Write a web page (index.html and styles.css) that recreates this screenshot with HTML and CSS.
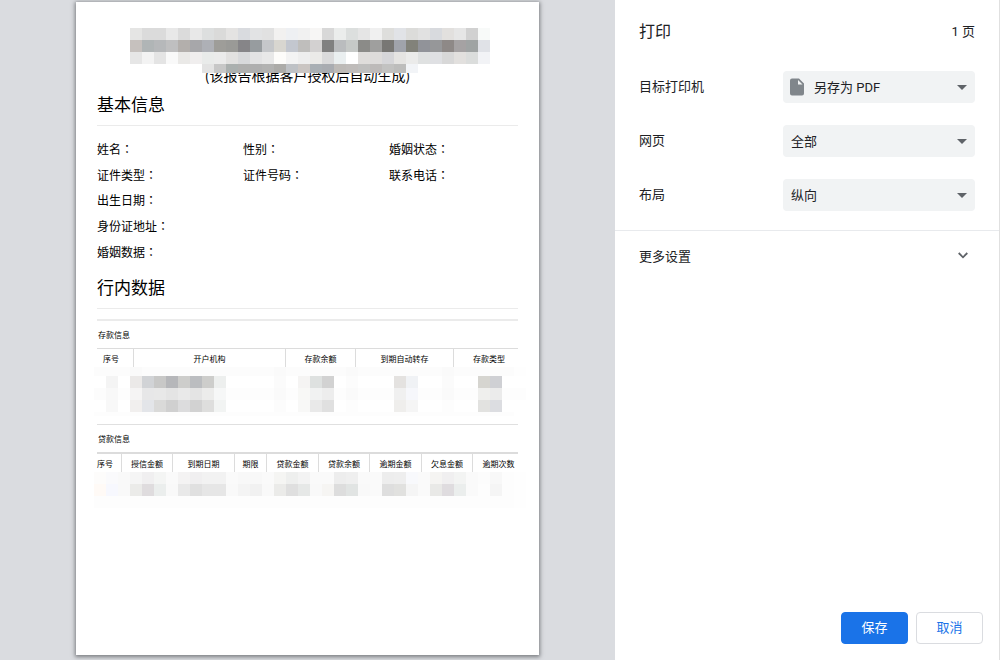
FILE: index.html
```html
<!DOCTYPE html>
<html lang="zh-CN">
<head>
<meta charset="utf-8">
<title>打印</title>
<link rel="stylesheet" href="styles.css">
</head>
<body>
<div class="dialog">
  <main class="preview">
    <article class="sheet">
      <svg class="mosaic mosaic-title" id="mosaic-title" width="360" height="45" aria-hidden="true"></svg>
      <p class="subtitle">(该报告根据客户授权后自动生成)</p>

      <h2 class="heading">基本信息</h2>
      <div class="fields">
        <span>姓名<span class="colon" lang="ja">：</span></span>
        <span>性别<span class="colon" lang="ja">：</span></span>
        <span>婚姻状态<span class="colon" lang="ja">：</span></span>
        <span>证件类型<span class="colon" lang="ja">：</span></span>
        <span>证件号码<span class="colon" lang="ja">：</span></span>
        <span>联系电话<span class="colon" lang="ja">：</span></span>
        <span class="wide">出生日期<span class="colon" lang="ja">：</span></span>
        <span class="wide">身份证地址<span class="colon" lang="ja">：</span></span>
        <span class="wide">婚姻数据<span class="colon" lang="ja">：</span></span>
      </div>

      <h2 class="heading">行内数据</h2>
      <section class="records deposits">
        <h3 class="records-title">存款信息</h3>
        <table class="grid">
          <colgroup><col class="w36"><col class="w152"><col class="w70"><col class="w98"><col class="w65"></colgroup>
          <thead><tr><th>序号</th><th>开户机构</th><th>存款余额</th><th>到期自动转存</th><th>存款类型</th></tr></thead>
        </table>
        <svg class="mosaic mosaic-table" id="mosaic-deposits" width="432" height="49" aria-hidden="true"></svg>
      </section>
      <section class="records loans">
        <h3 class="records-title">贷款信息</h3>
        <table class="grid">
          <colgroup><col class="w24"><col class="w51"><col class="w62"><col class="w32"><col class="w52"><col class="w51"><col class="w52"><col class="w51"><col class="w46"></colgroup>
          <thead><tr><th>序号</th><th>授信金额</th><th>到期日期</th><th>期限</th><th>贷款金额</th><th>贷款余额</th><th>逾期金额</th><th>欠息金额</th><th>逾期次数</th></tr></thead>
        </table>
        <svg class="mosaic mosaic-table" id="mosaic-loans" width="432" height="36" aria-hidden="true"></svg>
      </section>
    </article>
  </main>

  <aside class="panel">
    <header class="panel-head">
      <h1 class="panel-title">打印</h1>
      <span class="page-count">1 页</span>
    </header>
    <div class="setting">
      <label for="printer">目标打印机</label>
      <div class="picker">
        <select id="printer" class="with-icon"><option>另存为 PDF</option></select>
        <svg class="file-icon" width="14" height="18" viewBox="0 0 14 18" aria-hidden="true"><path d="M2 .5h7L14 5.500V15.500a2 2 0 0 1-2 2H2a2 2 0 0 1-2-2V2.500a2 2 0 0 1 2-2z" fill="#80868b"/><path d="M8 2v4.500h4.500z" fill="#f1f3f4"/></svg>
        <svg class="arrow" width="10" height="5" viewBox="0 0 10 5" aria-hidden="true"><path d="M0 0h10L5 5z" fill="#5f6368"/></svg>
      </div>
    </div>
    <div class="setting">
      <label for="pages">网页</label>
      <div class="picker">
        <select id="pages"><option>全部</option></select>
        <svg class="arrow" width="10" height="5" viewBox="0 0 10 5" aria-hidden="true"><path d="M0 0h10L5 5z" fill="#5f6368"/></svg>
      </div>
    </div>
    <div class="setting">
      <label for="layout">布局</label>
      <div class="picker">
        <select id="layout"><option>纵向</option></select>
        <svg class="arrow" width="10" height="5" viewBox="0 0 10 5" aria-hidden="true"><path d="M0 0h10L5 5z" fill="#5f6368"/></svg>
      </div>
    </div>
    <button class="more" type="button">
      <span>更多设置</span>
      <svg width="10" height="7" viewBox="0 0 10 7" aria-hidden="true"><path d="M.7 1L5 5.300L9.300 1" fill="none" stroke="#5f6368" stroke-width="1.800"/></svg>
    </button>
    <footer class="actions">
      <button class="btn primary" type="button">保存</button>
      <button class="btn" type="button">取消</button>
    </footer>
  </aside>
</div>
<script src="mosaic.js"></script>
</body>
</html>
```

FILE: styles.css
```css
* {
  box-sizing: border-box;
}

body {
  margin: 0;
  color: #202124;
  font-family: Roboto, "Noto Sans CJK SC", sans-serif;
  font-size: 13px;
}

h1, h2, h3, p {
  margin: 0;
  font-weight: 400;
}

.dialog {
  display: flex;
  min-height: 100vh;
}

/* Preview */
.preview {
  flex: 1;
  display: flex;
  min-width: 0;
  padding: 2px 76px 5px;
  background: #dadce0;
}

.sheet {
  flex: 1;
  min-width: 0;
  padding: 26px 21px 0;
  background: #fff;
  box-shadow: 0 1px 4px 1px rgba(60, 64, 67, 0.6);
  color: #000;
  font-family: "Noto Sans CJK SC", sans-serif;
}

.mosaic {
  display: block;
  position: relative;
  shape-rendering: crispEdges;
}

.mosaic-title {
  z-index: 1;
  margin: 0 auto -8px 33px;
}

.mosaic-table {
  margin-left: -3px;
}

.subtitle {
  padding-bottom: 2px;
  font-size: 14px;
  line-height: 20px;
  text-align: center;
}

.heading {
  margin-top: 5px;
  padding-bottom: 9px;
  border-bottom: 1px solid #ebebeb;
  font-size: 17px;
  line-height: 24px;
}

.fields {
  display: grid;
  grid-template-columns: 146px 146px 1fr;
  grid-auto-rows: 26px;
  align-items: center;
  padding: 10px 0 4px;
  font-size: 12px;
  line-height: 18px;
}

.wide {
  grid-column: 1 / -1;
  padding-bottom: 2px;
}

.colon {
  font-family: "Noto Sans CJK JP", sans-serif;
}

.records {
  font-size: 8px;
}

.deposits {
  margin-top: 10px;
  border-top: 2px solid #ebebeb;
}

.loans {
  margin-top: 8px;
  border-top: 1px solid #e0e0e0;
}

.records-title {
  padding-left: 1px;
  font-size: 8px;
  line-height: 27px;
}

.grid {
  width: 100%;
  table-layout: fixed;
  border-spacing: 0;
  border-top: 1px solid #dcdcdc;
}

.loans .grid {
  border-top-width: 2px;
}

.grid th {
  height: 18px;
  padding: 2px 0 0;
  border-left: 1px solid #dcdcdc;
  font-weight: 400;
  line-height: 16px;
  white-space: nowrap;
}

.grid th:first-child {
  padding-right: 8px;
  border-left: 0;
}

.grid th:last-child {
  padding-left: 6px;
}

.w24 { width: 24px; }
.w32 { width: 32px; }
.w36 { width: 36px; }
.w46 { width: 46px; }
.w51 { width: 51px; }
.w52 { width: 52px; }
.w62 { width: 62px; }
.w65 { width: 65px; }
.w70 { width: 70px; }
.w98 { width: 98px; }
.w152 { width: 152px; }

/* Settings panel */
.panel {
  display: flex;
  flex-direction: column;
  flex: 0 0 385px;
  border-right: 1px solid #e0e0e0;
  background: #fff;
}

.panel-head {
  display: flex;
  align-items: center;
  justify-content: space-between;
  height: 60px;
  padding: 0 24px;
}

.panel-title {
  font-size: 16px;
}

.setting {
  display: flex;
  align-items: center;
  justify-content: space-between;
  height: 54px;
  padding: 0 24px;
}

.setting label {
  padding-bottom: 4px;
}

.picker {
  position: relative;
  width: 192px;
}

.picker select {
  appearance: none;
  display: block;
  width: 100%;
  height: 32px;
  padding: 0 24px 0 8px;
  border: 0;
  border-radius: 4px;
  background: #f1f3f4;
  color: #202124;
  font: inherit;
}

.picker .with-icon {
  padding-left: 31px;
}

.file-icon {
  position: absolute;
  top: 7px;
  left: 7px;
}

.arrow {
  position: absolute;
  top: 14px;
  right: 8px;
  pointer-events: none;
}

.more {
  display: flex;
  align-items: center;
  justify-content: space-between;
  height: 51px;
  margin-top: 8px;
  padding: 0 31px 2px 24px;
  border: 0;
  border-top: 1px solid #e8eaed;
  background: none;
  color: inherit;
  font: inherit;
}

.actions {
  display: flex;
  justify-content: flex-end;
  gap: 8px;
  margin-top: auto;
  padding: 16px;
}

.btn {
  width: 67px;
  height: 32px;
  padding: 0 0 4px;
  border: 1px solid #dadce0;
  border-radius: 4px;
  background: #fff;
  color: #1a73e8;
  font: inherit;
}

.primary {
  border-color: #1a73e8;
  background: #1a73e8;
  color: #fff;
}
```

FILE: mosaic.js
```js
// Redacted areas: each row is [height, colours]; "-" leaves a cell empty,
// and "colour*n" repeats a cell n times.
const CELL = 12;

const mosaics = {
  "mosaic-title": [
    [12, "e5e5e4 dbdbdb*2 e8e8e8 dbdbdb e8e8e8 dddfdf dadad9 e4e3e2 d9dbdf e2e3e4 e1e1e1 f2f1f0 eef0f3 f1f1f1 f7f6f5 d8d8d8 ebedec dcdfde e5e5e5 f0f0f0 dededc e1e3e7 dcdcda e1e1e1 d8dade e2e0de e6e6e6 d1d1d1 f8faf9"],
    [12, "c6c1be b0b5b6 b6b8ba bfbfc0 b3afac a7a7aa aeb0b6 9e9d99 9a9a97 868588 979c9f c5c7ca d8d6d0 c3c7cf bfbebc d3d1d1 808080 babcbe c6c9c7 8b8b88 9f9f9e 787774 a0a3ab 82827a 919399 969799 8e8987 a5a2a3 9fa3a3 e0e2e7"],
    [12, "e6e6e6 f3f3f3 e4e4e4 f9f9f9 eae9e7 f0eeee e9ebea ebebeb e2e1e0 d8d9db e3e3e4 e8e8e8 fdfcfa f3f3f3 eeeeee ebeae8 dadadb eaeff0 ffffff dfdddb dedcdb d6d6d9 e5e4e2 ebebea dfe1e1 dfe0e3 d8d8d8 e2e0de dbdddc f2f3f6"],
    [9, "-*6 e3e3e3 c7c7c7 abb0af afafae afafaf b2b2b1 acaba8 bec1c5 cac5c2 a9afb4 a9acb1 bdbab7 bfbcba bfbfbe bdbab9 c2c2c1 bdbdbc f2f4f7"]
  ],
  "mosaic-deposits": [
    [9, "fcfcfc*3 fafafa fcfcfc*11 fafafa fcfcfc*5 fafafa fcfcfc*7 fafafa fcfcfc*5 fefefe"],
    [12, "- f4f4f4 - ebe9e8 d1d3d6 c8c8c7 b6b7ba cdcdcb bbbdc0 cdcdcb edefee -*4 fbfbfb - f5f4f3 dee1e0 d2d2d2 - fcfcfc -*3 e4e2e0 f0f2f5 -*2 fbfbfb -*2 d6d5d0 cfd0d4"],
    [12, "fcfcfc f8f8f8 fdfdfd f5f4f4 e7e7e8 e8e8e8 e4e4e4 e9e9e9 e4e4e4 ececeb f6f7f7 fdfdfd*4 fafafa fdfdfd f8f8f6 f1f2f2 ededed fdfdfd fafafa fdfdfd*3 f0f0f0 f6f7fb fdfdfd*2 fafafa fdfdfd*2 efefed ebebeb fdfdfd*2"],
    [12, "- f8f8f8 - f1efee e3e5e9 dadad9 d0d0d0 dcdcdd d2d2d2 dededd f2f4f3 -*4 fcfcfc - f8f8f7 e9e9e9 e0e0e0 - fdfdfd -*3 efeeec f5f5f5 -*2 fdfdfd -*2 e2e2e0 dcdde1"],
    [4, "fdfdfd*35"]
  ],
  "mosaic-loans": [
    [12, "fdfcfb fafafc f9f9f9 f5f5f5 f0eff0 f4f5f4 fafafa f4f3f3 f0eff0 f2f2f2*2 fafafa f8f8f8*2 fafafa f5f5f3 eeefee f3f3f3 fafafa*2 ededed efefef fafafa*2 ededed eeeeee f8f9fc fafafa f5f4f2 f0eff0 f3f4f3 fafafa fcfcfc f8f8f8 fdfdfd fefefe"],
    [12, "fffaf6 f7f8fe f9f9f9 ebebe9 dfdcde ebeeed f9f9f9 e9e9e9 e0e0e0 e6e6e6*2 f9f9f9 f4f4f4 f1f1f1 f9f9f9 ebebe9 dfdfdf e6e8e7 f9f9f9 f6f5f3 dddddd e1e4e3 f9f9f9 fafafa dedede e1e1df f5f5f5 fafafa e9e9e7 dfdcdf ebeeed fafafa fdfdfd f5f5f5 fdfdfd fefefe"],
    [12, "fdfdfd*35 fefefe"]
  ]
};

for (const [id, rows] of Object.entries(mosaics)) {
  const svg = document.getElementById(id);
  let y = 0;
  for (const [height, cells] of rows) {
    let x = 0;
    for (const cell of cells.split(" ")) {
      const [color, count = 1] = cell.split("*");
      const width = CELL * count;
      if (color !== "-") {
        const rect = document.createElementNS("http://www.w3.org/2000/svg", "rect");
        rect.setAttribute("x", x);
        rect.setAttribute("y", y);
        rect.setAttribute("width", width);
        rect.setAttribute("height", height);
        rect.setAttribute("fill", "#" + color);
        svg.append(rect);
      }
      x += width;
    }
    y += height;
  }
}
```
